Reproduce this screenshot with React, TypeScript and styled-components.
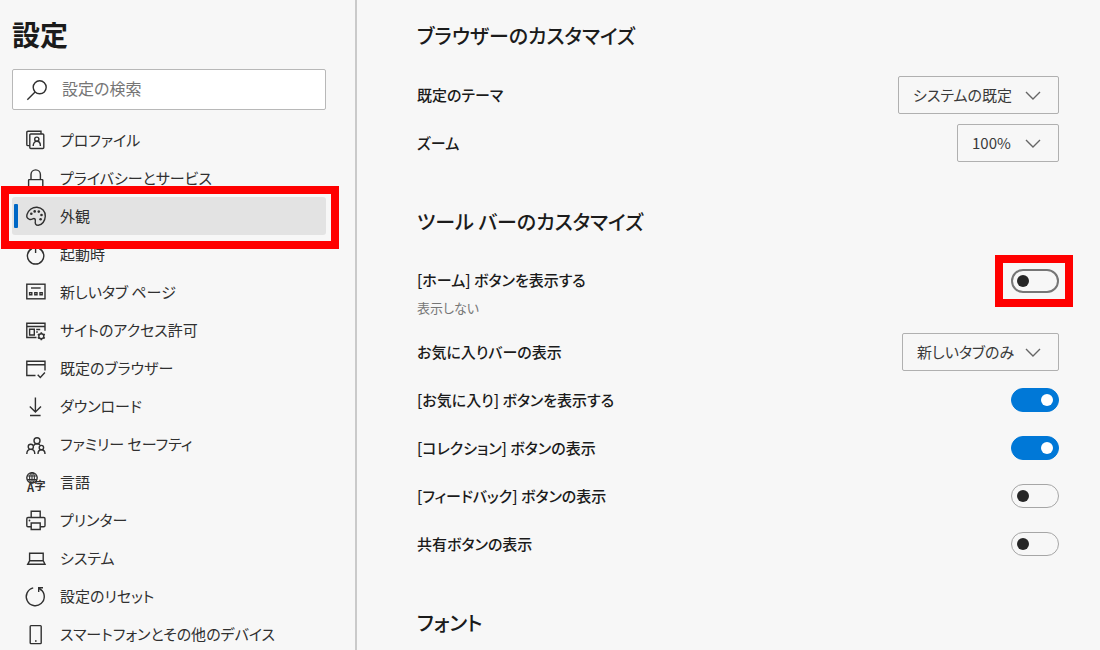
import React from "react";
import styled, { createGlobalStyle, css } from "styled-components";

const GlobalStyle = createGlobalStyle`
  *, *::before, *::after { box-sizing: border-box; }
  body {
    margin: 0;
    background: #f7f7f7;
    color: #1b1b1b;
    font-family: "Noto Sans CJK JP", "Noto Sans", sans-serif;
    font-feature-settings: "palt";
    font-size: 15px;
    line-height: 22px;
  }
  input, select, button { font: inherit; font-feature-settings: inherit; color: inherit; }
`;

const Shell = styled.div`
  display: flex;
  height: 100vh;
  overflow: hidden;
`;

const Sidebar = styled.aside`
  flex: 0 0 357px;
  padding: 14px 29px 0 12px;
  border-right: 2px solid #cacaca;
`;

const Title = styled.h1`
  margin: 0 0 15px;
  font-size: 28px;
  line-height: 40px;
  font-weight: 700;
`;

const SearchBox = styled.label`
  display: flex;
  align-items: center;
  gap: 15px;
  height: 41px;
  margin-bottom: 11px;
  padding: 0 14px;
  background: #fff;
  border: 1px solid #b8b8b8;
  border-radius: 2px;
`;

const SearchInput = styled.input`
  flex: 1;
  min-width: 0;
  padding: 0 0 4px;
  border: 0;
  outline: 0;
  background: transparent;
  font-size: 16px;
  &::placeholder { color: #767676; opacity: 1; }
`;

const NavList = styled.ul`
  margin: 0;
  padding: 0;
  list-style: none;
`;

const NavItem = styled.li`
  position: relative;
`;

const NavLink = styled.a<{ $active?: boolean }>`
  position: relative;
  display: flex;
  align-items: center;
  gap: 14px;
  height: 38px;
  padding-left: 14px;
  border-radius: 3px;
  color: #303030;
  text-decoration: none;
  white-space: nowrap;
  ${(p) =>
    p.$active &&
    css`
      background: #e3e3e3;
      &::before {
        content: "";
        position: absolute;
        left: 2px;
        top: 7px;
        width: 4px;
        height: 24px;
        border-radius: 1px;
        background: #0067c5;
      }
    `}
`;

const Icon = styled.svg`
  flex: none;
  width: 20px;
  height: 20px;
  overflow: visible;
  fill: none;
  stroke: #303030;
  stroke-width: 1.4;
  .solid { fill: #303030; stroke: none; }
  text { fill: #303030; stroke: none; font-weight: 700; }
`;

const Highlight = styled.span<{ $inset: string }>`
  position: absolute;
  z-index: 1;
  inset: ${(p) => p.$inset};
  border: 8px solid #ff0000;
  pointer-events: none;
`;

const Main = styled.main`
  flex: 1;
  min-width: 0;
  padding: 20px 41px 0 60px;
`;

const Section = styled.section`
  margin-bottom: 39px;
`;

const SectionTitle = styled.h2`
  margin: 0 0 19px;
  font-size: 20px;
  line-height: 32px;
  font-weight: 500;
`;

const Row = styled.div<{ $tall?: boolean }>`
  display: flex;
  justify-content: space-between;
  align-items: ${(p) => (p.$tall ? "flex-start" : "center")};
  min-height: 48px;
  padding: ${(p) => (p.$tall ? "12px 0 9px" : "0")};
`;

const RowLabel = styled.label`
  display: block;
  font-weight: 500;
`;

const Hint = styled.p`
  margin: 6px 0 0;
  font-size: 13px;
  color: #767676;
`;

const SelectWrap = styled.div<{ $width: number }>`
  position: relative;
  width: ${(p) => p.$width}px;
`;

const Select = styled.select`
  display: block;
  width: 100%;
  height: 38px;
  padding: 0 40px 0 14px;
  appearance: none;
  border: 1px solid #b0b0b0;
  border-radius: 2px;
  background: transparent;
  color: #3a3a3a;
`;

const Chevron = styled.svg`
  position: absolute;
  right: 18px;
  top: 15px;
  width: 16px;
  height: 10px;
  fill: none;
  stroke: #666;
  stroke-width: 1.4;
  pointer-events: none;
`;

const SwitchWrap = styled.span`
  position: relative;
  display: flex;
`;

const Switch = styled.input<{ $strong?: boolean }>`
  appearance: none;
  display: flex;
  align-items: center;
  width: 48px;
  height: 24px;
  margin: 0;
  padding: ${(p) => (p.$strong ? "0 4px" : "0 5px")};
  border: ${(p) => (p.$strong ? "2px solid #767676" : "1px solid #a6a6a6")};
  border-radius: 12px;
  background: transparent;
  &::before {
    content: "";
    width: 12px;
    height: 12px;
    border-radius: 50%;
    background: #262626;
  }
  &:checked {
    justify-content: flex-end;
    border-color: #0078d7;
    background: #0078d7;
  }
  &:checked::before { background: #fff; }
`;

const icons: Record<string, React.ReactNode> = {
  profile: (
    <>
      <rect x="3.800" y="4" width="14" height="14.500" rx="1" />
      <path d="M3.800 15.600H2a1.200 1.200 0 0 1-1.200-1.200V2.400A1.200 1.200 0 0 1 2 1.200h13V4" />
      <circle cx="10.800" cy="9.200" r="2.100" />
      <path d="M7.200 16c0-2.800 1.400-4.700 3.600-4.700s3.600 1.900 3.600 4.700" />
    </>
  ),
  privacy: (
    <>
      <path d="M5 11.600V6.600a4.700 4.700 0 0 1 9.400 0v5" />
      <rect x="2.600" y="11.600" width="14.200" height="8" rx=".6" />
    </>
  ),
  appearance: (
    <>
      <path d="M1 8.500C2.500 4 6.500 1 11 1.200c5 .3 8.500 4.300 8.300 9-.2 4.800-3.300 9-7 9-2.800 0-3.400-1.800-3-4 .3-2.200-.6-3.200-2.600-2.400-1 .5-2 .9-3.200.5C1.300 12.600.4 10.600 1 8.500Z" />
      <g className="solid">
        <circle cx="5.300" cy="7.800" r="1.300" />
        <circle cx="8.700" cy="5.400" r="1.300" />
        <circle cx="12.800" cy="5.600" r="1.300" />
        <circle cx="15.500" cy="9" r="1.300" />
        <circle cx="14.600" cy="13.200" r="1.300" />
      </g>
    </>
  ),
  startup: <path d="M6 4.500a8.200 8.200 0 1 0 7.200 0M9.600 1.500V9" />,
  newtab: (
    <>
      <rect x=".8" y="2.200" width="18.200" height="14.600" />
      <path d="M5 6h9.600" />
      <path d="M3.600 10.600h2.200v2.200H3.600zM8.800 10.600H11v2.200H8.800zM14 10.600h2.200v2.200H14z" />
    </>
  ),
  site: (
    <>
      <path d="M10.500 17.500H.8V3.200H19v7.600M.8 6.500H19" />
      <path d="M3.600 9.200h4.700v5.800H3.600zM10.200 9.500h4M10.200 12h1.600" />
      <circle cx="15.300" cy="16.300" r="2.500" />
      <path
        d="M15.300 12.300v1.400M15.300 18.900v1.400M11.800 14.300l1.300.7M17.500 17.600l1.300.7M11.800 18.300l1.300-.7M17.500 15l1.300-.7"
        strokeWidth="1.600"
      />
    </>
  ),
  browser: <path d="M9.500 17.500H.8V3.200H19v9.300M.8 6.800H19M11.700 16.800l2.600 2.600 4.600-4.900" />,
  download: <path d="M9.400 1.500v14.300M3.800 10.500l5.600 5.600 5.600-5.600M4 19.500h10.600" />,
  family: (
    <>
      <circle cx="11" cy="6.800" r="3" />
      <circle cx="4.800" cy="12.800" r="2.600" />
      <circle cx="15.400" cy="13.600" r="2.200" />
      <path d="M.8 20c0-2.900 1.500-4.600 4-4.600s4 1.700 4 4.600M12 20c0-2.700 1.200-4.200 3.400-4.200S19 17.300 19 20M7.600 11.600c.8-1.200 1.900-1.800 3.400-1.800 1.200 0 2.200.4 3 1.200" />
    </>
  ),
  language: (
    <>
      <circle cx="6" cy="5.800" r="5.200" />
      <path d="M1.400 4h9.200M1.400 7.600h9.200M6 .6v10.400" strokeWidth="1.100" />
      <ellipse cx="6" cy="5.800" rx="2.400" ry="5.200" strokeWidth="1.100" />
      <text x="1" y="20" fontSize="11" stroke="none">A</text>
      <text x="8.500" y="17.500" fontSize="11">字</text>
    </>
  ),
  printer: (
    <>
      <path d="M5.200 7.500V1.200h9V7.500" />
      <path d="M5.200 16.700H2a1.200 1.200 0 0 1-1.200-1.200V8.700A1.200 1.200 0 0 1 2 7.500h15.800A1.200 1.200 0 0 1 19 8.700v6.800a1.200 1.200 0 0 1-1.200 1.200h-3.600" />
      <path d="M5.200 13h9v6.500h-9z" />
      <circle className="solid" cx="3.500" cy="10.500" r=".9" />
    </>
  ),
  system: <path d="M3.600 12.800V5.200h13.600v7.600M3.600 12.800h13.600l1.800 3.500H1.700z" />,
  reset: <path d="M7.200 1.900a9 9 0 1 0 7.400 1.500M17 1.700h-4.300V6M12.900 1.900l2.600 2.600" />,
  phone: (
    <>
      <rect x="4.200" y="1.600" width="11" height="18" rx=".8" />
      <path d="M9 17h1.600" />
    </>
  ),
};

const navItems = [
  { icon: "profile", label: "プロファイル" },
  { icon: "privacy", label: "プライバシーとサービス" },
  { icon: "appearance", label: "外観", active: true },
  { icon: "startup", label: "起動時" },
  { icon: "newtab", label: "新しいタブ ページ" },
  { icon: "site", label: "サイトのアクセス許可" },
  { icon: "browser", label: "既定のブラウザー" },
  { icon: "download", label: "ダウンロード" },
  { icon: "family", label: "ファミリー セーフティ" },
  { icon: "language", label: "言語" },
  { icon: "printer", label: "プリンター" },
  { icon: "system", label: "システム" },
  { icon: "reset", label: "設定のリセット" },
  { icon: "phone", label: "スマートフォンとその他のデバイス" },
];

function SelectRow({ id, label, value, width }: { id: string; label: string; value: string; width: number }) {
  return (
    <Row>
      <RowLabel htmlFor={id}>{label}</RowLabel>
      <SelectWrap $width={width}>
        <Select id={id}>
          <option>{value}</option>
        </Select>
        <Chevron viewBox="0 0 16 10" aria-hidden="true">
          <path d="M1 1l7 7 7-7" />
        </Chevron>
      </SelectWrap>
    </Row>
  );
}

function SwitchRow({
  id,
  label,
  on,
  hint,
  highlighted,
}: {
  id: string;
  label: string;
  on?: boolean;
  hint?: string;
  highlighted?: boolean;
}) {
  return (
    <Row $tall={Boolean(hint)}>
      <div>
        <RowLabel htmlFor={id}>{label}</RowLabel>
        {hint && <Hint>{hint}</Hint>}
      </div>
      <SwitchWrap>
        <Switch id={id} type="checkbox" role="switch" defaultChecked={on} $strong={highlighted} />
        {highlighted && <Highlight $inset="-14px -14px -14px -16px" />}
      </SwitchWrap>
    </Row>
  );
}

export default function App() {
  return (
    <>
      <GlobalStyle />
      <Shell>
        <Sidebar>
          <Title>設定</Title>
          <SearchBox>
            <Icon viewBox="0 0 20 20" aria-hidden="true">
              <circle cx="12.700" cy="7.300" r="6.500" />
              <path d="M8.100 11.900L.3 19.700" />
            </Icon>
            <SearchInput type="search" placeholder="設定の検索" />
          </SearchBox>
          <nav>
            <NavList>
              {navItems.map((item) => (
                <NavItem key={item.icon}>
                  <NavLink href="#" $active={item.active} aria-current={item.active ? "page" : undefined}>
                    <Icon viewBox="0 0 20 20" aria-hidden="true">
                      {icons[item.icon]}
                    </Icon>
                    {item.label}
                  </NavLink>
                  {item.active && <Highlight $inset="-11px -13px -14px -11px" />}
                </NavItem>
              ))}
            </NavList>
          </nav>
        </Sidebar>
        <Main>
          <Section>
            <SectionTitle>ブラウザーのカスタマイズ</SectionTitle>
            <SelectRow id="theme" label="既定のテーマ" value="システムの既定" width={161} />
            <SelectRow id="zoom" label="ズーム" value="100%" width={102} />
          </Section>
          <Section>
            <SectionTitle>ツール バーのカスタマイズ</SectionTitle>
            <SwitchRow id="home" label="[ホーム] ボタンを表示する" hint="表示しない" highlighted />
            <SelectRow id="favbar" label="お気に入りバーの表示" value="新しいタブのみ" width={157} />
            <SwitchRow id="fav" label="[お気に入り] ボタンを表示する" on />
            <SwitchRow id="collections" label="[コレクション] ボタンの表示" on />
            <SwitchRow id="feedback" label="[フィードバック] ボタンの表示" />
            <SwitchRow id="share" label="共有ボタンの表示" />
          </Section>
          <Section>
            <SectionTitle>フォント</SectionTitle>
          </Section>
        </Main>
      </Shell>
    </>
  );
}
